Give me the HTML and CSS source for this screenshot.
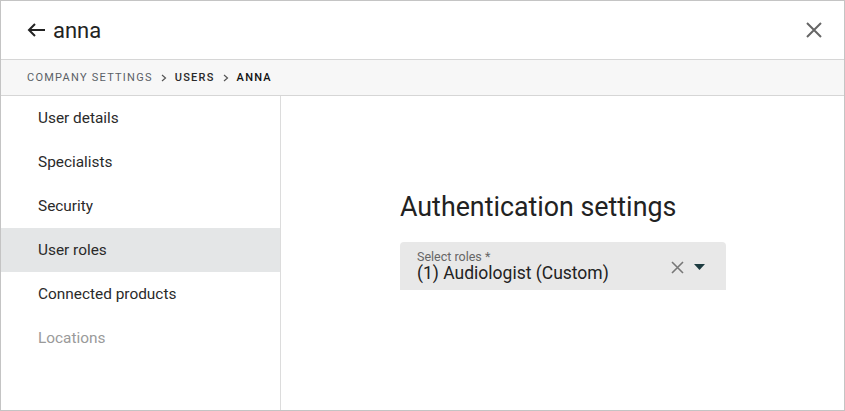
FILE: index.html
```html
<!DOCTYPE html>
<html>
<head>
<meta charset="utf-8">
<link rel="stylesheet" href="styles.css">
</head>
<body>
<div class="dialog">
  <header class="header">
    <div class="title">
      <svg class="back" width="20" height="16" viewBox="0 0 20 16"><path d="M19 8H3M9 2L3 8l6 6" fill="none" stroke="#222" stroke-width="2"/></svg>
      <span>anna</span>
    </div>
    <svg class="close" width="16" height="16" viewBox="0 0 16 16"><path d="M1 1L15 15M15 1L1 15" stroke="#666" stroke-width="2"/></svg>
  </header>
  <nav class="crumbs">
    <span class="c1">COMPANY SETTINGS</span>
    <svg class="sep" width="6" height="8" viewBox="0 0 6 8"><path d="M1 1L4.5 4L1 7" fill="none" stroke="#555" stroke-width="1.2"/></svg>
    <span class="c2">USERS</span>
    <svg class="sep" width="6" height="8" viewBox="0 0 6 8"><path d="M1 1L4.5 4L1 7" fill="none" stroke="#555" stroke-width="1.2"/></svg>
    <span class="c3">ANNA</span>
  </nav>
  <div class="body">
    <aside class="side">
      <div class="item">User details</div>
      <div class="item">Specialists</div>
      <div class="item">Security</div>
      <div class="item active">User roles</div>
      <div class="item">Connected products</div>
      <div class="item disabled">Locations</div>
    </aside>
    <main class="main">
      <h1 class="heading">Authentication settings</h1>
      <div class="select">
        <div class="select-text">
          <div class="label">Select roles *</div>
          <div class="value">(1) Audiologist (Custom)</div>
        </div>
        <svg class="clear" width="13" height="13" viewBox="0 0 13 13"><path d="M1 1L12 12M12 1L1 12" stroke="#777" stroke-width="1.6"/></svg>
        <svg class="caret" width="11" height="6" viewBox="0 0 11 6"><path d="M0 0H11L5.5 6Z" fill="#1d3b40"/></svg>
      </div>
    </main>
  </div>
</div>
</body>
</html>
```
FILE: styles.css
```css
* { box-sizing: border-box; }
html, body { margin: 0; padding: 0; }
body {
  font-family: Roboto, "Noto Sans", sans-serif;
  color: #222;
  background: #fff;
}
.dialog {
  width: 845px;
  height: 411px;
  border: 1px solid #c4c4c4;
  display: flex;
  flex-direction: column;
}
.header {
  height: 59px;
  flex: none;
  display: flex;
  align-items: center;
  justify-content: space-between;
  padding: 0 22px 0 25px;
  border-bottom: 1px solid #d6d6d6;
}
.title {
  display: flex;
  align-items: center;
  gap: 7px;
  font-size: 22px;
  color: #222;
}
.crumbs {
  height: 36px;
  flex: none;
  background: #f7f7f7;
  border-bottom: 1px solid #d6d6d6;
  display: flex;
  align-items: center;
  padding-left: 26px;
  font-size: 11px;
  letter-spacing: 1.25px;
  gap: 8px;
}
.c1 { color: #5a5f66; }
.sep { flex: none; }
.c2 { color: #2a2a2a; font-weight: 500; }
.c3 { color: #111; font-weight: 500; }
.body {
  flex: 1;
  display: flex;
  min-height: 0;
}
.side {
  width: 280px;
  flex: none;
  border-right: 1px solid #dcdcdc;
}
.item {
  height: 44px;
  display: flex;
  align-items: center;
  padding-left: 37px;
  font-size: 15.4px;
  color: #2a2a2a;
}
.item.active { background: #e4e6e7; }
.item.disabled { color: #9a9a9a; }
.main {
  flex: 1;
  padding: 95px 0 0 119px;
}
.heading {
  margin: 0 0 19px;
  font-size: 26.8px;
  font-weight: 400;
  color: #222;
  line-height: 32px;
}
.select {
  width: 326px;
  height: 48px;
  background: #e8e8e8;
  border-radius: 4px 4px 0 0;
  display: flex;
  align-items: center;
  padding: 0 21px 0 17px;
}
.select-text { flex: 1; padding-top: 2px; }
.label { font-size: 12.5px; color: #666; line-height: 13px; }
.value { font-size: 17.5px; color: #222; line-height: 21px; }
.clear { margin-right: 10px; margin-top: 2px; }
.caret { margin-top: 2px; }
```
